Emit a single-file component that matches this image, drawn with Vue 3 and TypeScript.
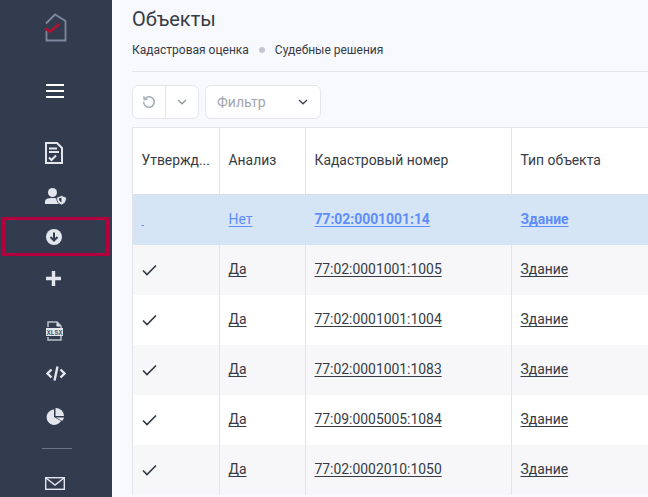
<template>
  <div class="page">
    <aside class="sidebar">
      <svg class="logo" width="24" height="30" viewBox="0 0 24 30">
        <path d="M2 10.500 L11 1.500 L21.500 8 V27.500 H2.500 V18" fill="none" stroke="#7d889f" stroke-width="1.800" />
        <path d="M1 15.300 L6 18.700 L15.300 11" fill="none" stroke="#b5102f" stroke-width="2.400" />
      </svg>

      <button class="nav-item menu">
        <svg width="18" height="14" viewBox="0 0 18 14">
          <path d="M0 1h18M0 7h18M0 13h18" stroke="#fff" stroke-width="2" />
        </svg>
      </button>

      <button class="nav-item doc">
        <svg width="18" height="22" viewBox="0 0 18 22">
          <path d="M1 1h11l5 5v15H1z" fill="none" stroke="#e3e6ec" stroke-width="2" />
          <path d="M4 6.500h8M4 10h10" stroke="#e3e6ec" stroke-width="2" />
          <path d="M4 15.500l2.500 2.500 4.500-4.500" fill="none" stroke="#e3e6ec" stroke-width="2" />
        </svg>
      </button>

      <button class="nav-item user">
        <svg width="22" height="17" viewBox="0 0 22 17">
          <circle cx="7.500" cy="4.500" r="4.500" fill="#e3e6ec" />
          <path d="M0 16v-2.500C0 11 3 10 7 10s5.500 .5 7 1.500V16z" fill="#e3e6ec" />
          <path d="M11.500 9.500l5-2 5 2c0 4-2 6.500-5 7.500-3-1-5-3.500-5-7.500z" fill="#e3e6ec" stroke="#333c4f" stroke-width=".8" />
          <path d="M16.500 9.500v5c-1.700-.7-2.600-2.500-2.700-4z" fill="#333c4f" />
        </svg>
      </button>

      <button class="nav-item active">
        <svg width="16" height="16" viewBox="0 0 16 16">
          <circle cx="8" cy="8" r="8" fill="#e3e6ec" />
          <path d="M8 3.500v8M4.500 8l3.500 3.500L11.500 8" fill="none" stroke="#333c4f" stroke-width="2" />
        </svg>
      </button>

      <button class="nav-item plus">
        <svg width="15" height="15" viewBox="0 0 15 15">
          <path d="M7.500 0v15M0 7.500h15" stroke="#e3e6ec" stroke-width="3.400" />
        </svg>
      </button>

      <button class="nav-item xlsx">
        <svg width="17" height="20" viewBox="0 0 17 20">
          <path d="M2 6V1h9l4 4v14H2v-3" fill="none" stroke="#b9bfcc" stroke-width="1.500" />
          <path d="M10.500 1v4.500H15" fill="#e3e6ec" />
          <rect x="0" y="7" width="17" height="8" fill="#e3e6ec" />
          <text x="8.500" y="13.600" text-anchor="middle" class="xlsx-text">XLSX</text>
        </svg>
      </button>

      <button class="nav-item code">
        <svg width="20" height="15" viewBox="0 0 20 15">
          <path d="M5.500 3.500L1.500 7.500l4 4M14.500 3.500l4 4-4 4" fill="none" stroke="#e3e6ec" stroke-width="2.400" />
          <path d="M11.500 .5L8.500 14.500" stroke="#e3e6ec" stroke-width="2.400" />
        </svg>
      </button>

      <button class="nav-item pie">
        <svg width="18" height="17" viewBox="0 0 18 17">
          <path d="M8 1.500a7.700 7.700 0 1 0 7 11.500L8 9z" fill="#e3e6ec" />
          <path d="M9.500 0a8 8 0 0 1 8.500 8H9.500z" fill="#e3e6ec" />
          <path d="M10 9.500h8a8 8 0 0 1-1.800 3.500z" fill="#e3e6ec" />
        </svg>
      </button>

      <div class="nav-divider"></div>

      <button class="nav-item mail">
        <svg width="20" height="13" viewBox="0 0 20 13">
          <rect x=".7" y=".7" width="18.600" height="11.600" fill="none" stroke="#e3e6ec" stroke-width="1.400" />
          <path d="M1 1l9 7 9-7" fill="none" stroke="#e3e6ec" stroke-width="1.400" />
        </svg>
      </button>
    </aside>

    <main class="content">
      <header class="head">
        <h1>Объекты</h1>
        <div class="crumbs">
          <span>Кадастровая оценка</span>
          <i class="dot"></i>
          <span>Судебные решения</span>
        </div>
      </header>

      <div class="toolbar">
        <div class="btn-group">
          <button class="refresh">
            <svg width="14" height="14" viewBox="0 0 14 14">
              <path d="M3.200 3.200a5.300 5.300 0 1 1-1.600 3.600" fill="none" stroke="#a5adba" stroke-width="1.600" />
              <path d="M1.800 1.300l.5 3.200 3.200-.5" fill="none" stroke="#a5adba" stroke-width="1.600" />
            </svg>
          </button>
          <button class="more">
            <svg width="10" height="6" viewBox="0 0 10 6">
              <path d="M1 1l4 3.800L9 1" fill="none" stroke="#8d939e" stroke-width="1.200" />
            </svg>
          </button>
        </div>
        <button class="filter">
          <span>Фильтр</span>
          <svg width="10" height="6" viewBox="0 0 10 6">
            <path d="M1 1l4 3.800L9 1" fill="none" stroke="#3d4350" stroke-width="1.300" />
          </svg>
        </button>
      </div>

      <div class="table">
        <div class="row head-row">
          <div class="cell">Утвержд...</div>
          <div class="cell">Анализ</div>
          <div class="cell">Кадастровый номер</div>
          <div class="cell">Тип объекта</div>
        </div>
        <div
          v-for="(r, i) in rows"
          :key="r.num"
          class="row"
          :class="{ selected: i === 0, odd: i % 2 === 1 }"
        >
          <div class="cell">
            <a v-if="i === 0" class="dash">&nbsp;</a>
            <svg v-else class="check" width="15" height="12" viewBox="0 0 15 12">
              <path d="M1 6.500l4 4L14 1.500" fill="none" stroke="#333a46" stroke-width="1.700" />
            </svg>
          </div>
          <div class="cell"><a>{{ r.analysis }}</a></div>
          <div class="cell"><a>{{ r.num }}</a></div>
          <div class="cell"><a>{{ r.type }}</a></div>
        </div>
      </div>
    </main>
  </div>
</template>

<script setup lang="ts">
interface ObjectRow {
  analysis: string
  num: string
  type: string
}

const rows: ObjectRow[] = [
  { analysis: 'Нет', num: '77:02:0001001:14', type: 'Здание' },
  { analysis: 'Да', num: '77:02:0001001:1005', type: 'Здание' },
  { analysis: 'Да', num: '77:02:0001001:1004', type: 'Здание' },
  { analysis: 'Да', num: '77:02:0001001:1083', type: 'Здание' },
  { analysis: 'Да', num: '77:09:0005005:1084', type: 'Здание' },
  { analysis: 'Да', num: '77:02:0002010:1050', type: 'Здание' }
]
</script>

<style>
html,
body {
  margin: 0;
  overflow: hidden;
}
</style>

<style scoped>
.page {
  display: flex;
  width: 648px;
  height: 497px;
  overflow: hidden;
  background: #f8f9fd;
  font-family: Roboto, sans-serif;
  color: #363b45;
}

.sidebar {
  flex: 0 0 112px;
  display: flex;
  flex-direction: column;
  align-items: flex-start;
  padding: 13px 0 0 2px;
  box-sizing: border-box;
  background: #333c4f;
}

.logo {
  display: block;
  margin-left: 42px;
  flex: none;
}

.nav-item {
  flex: none;
  display: flex;
  align-items: center;
  justify-content: center;
  width: 106px;
  height: 40px;
  padding: 0;
  border: 3px solid transparent;
  box-sizing: border-box;
  background: none;
}

.menu { margin-top: 28px; }
.doc { margin-top: 22px; padding-right: 2px; }
.user { margin-top: 3px; padding-left: 2px; }
.active {
  width: 107px;
  height: 39px;
  margin-top: 1px;
  border-color: #b4003e;
  padding-right: 3px;
}
.plus { margin-top: 2px; padding-right: 3px; }
.xlsx { margin-top: 13px; padding-right: 1px; }
.code { margin-top: 2px; padding-left: 2px; }
.pie { margin-top: 3px; padding-right: 1px; }
.mail { margin-top: 14px; }

.xlsx-text {
  font-family: "Liberation Mono", monospace;
  font-size: 6.500px;
  font-weight: 700;
  fill: #4c5468;
}

.nav-divider {
  flex: none;
  width: 30px;
  height: 1px;
  margin: 12px 0 0 40px;
  background: #6c7486;
}

.content {
  flex: 1;
  min-width: 0;
  padding-left: 20px;
}

.head {
  border-bottom: 1px solid #e2e4ea;
  height: 71px;
}

h1 {
  margin: 0;
  padding-top: 7px;
  font-size: 20px;
  line-height: 24px;
  font-weight: 400;
  color: #363b45;
}

.crumbs {
  display: flex;
  align-items: center;
  gap: 10px;
  margin-top: 10px;
  font-size: 12px;
  line-height: 18px;
}

.dot {
  width: 6px;
  height: 6px;
  border-radius: 50%;
  background: #c3c6ce;
}

.toolbar {
  display: flex;
  gap: 6px;
  margin-top: 13px;
  height: 34px;
}

.btn-group,
.filter {
  box-sizing: border-box;
  height: 34px;
  border: 1px solid #e4e6ec;
  border-radius: 6px;
  background: #fff;
}

.btn-group {
  display: flex;
  width: 67px;
}

button {
  font-family: inherit;
}

.refresh,
.more {
  display: flex;
  align-items: center;
  justify-content: center;
  padding: 0;
  border: 0;
  background: none;
}

.refresh {
  width: 33px;
  border-right: 1px solid #e4e6ec;
}

.more {
  flex: 1;
}

.filter {
  display: flex;
  align-items: center;
  justify-content: space-between;
  width: 116px;
  padding: 0 12px 0 11px;
  font-size: 14px;
  color: #a2a6ae;
}

.table {
  width: 560px;
  margin-top: 8px;
  border-top: 1px solid #e2e4ea;
  border-left: 1px solid #e2e4ea;
  background: #fff;
}

.row {
  display: grid;
  grid-template-columns: 87px 86px 206px 181px;
  height: 50px;
}

.head-row {
  height: 66px;
  border-bottom: 1px solid #dcdee3;
}

.row.selected {
  background: #d6e5f5;
}

.row.odd {
  background: #f7f7f9;
}

.cell {
  display: flex;
  align-items: center;
  padding: 0 0 2px 8.500px;
  border-right: 1px solid #e2e4ea;
  font-size: 13.900px;
  white-space: nowrap;
}

.check {
  margin-top: 2px;
}

.head-row .cell {
  padding-bottom: 2px;
}

.row.selected .cell {
  border-right-color: #dbe2ea;
}

.row.selected .cell a {
  color: #5f8dfa;
}

.row .cell a {
  text-decoration: underline;
  text-underline-offset: 2px;
}

.row.selected .cell:nth-child(3) a,
.row.selected .cell:nth-child(4) a {
  font-weight: 700;
}

.dash {
  font-size: 10px;
}
</style>
